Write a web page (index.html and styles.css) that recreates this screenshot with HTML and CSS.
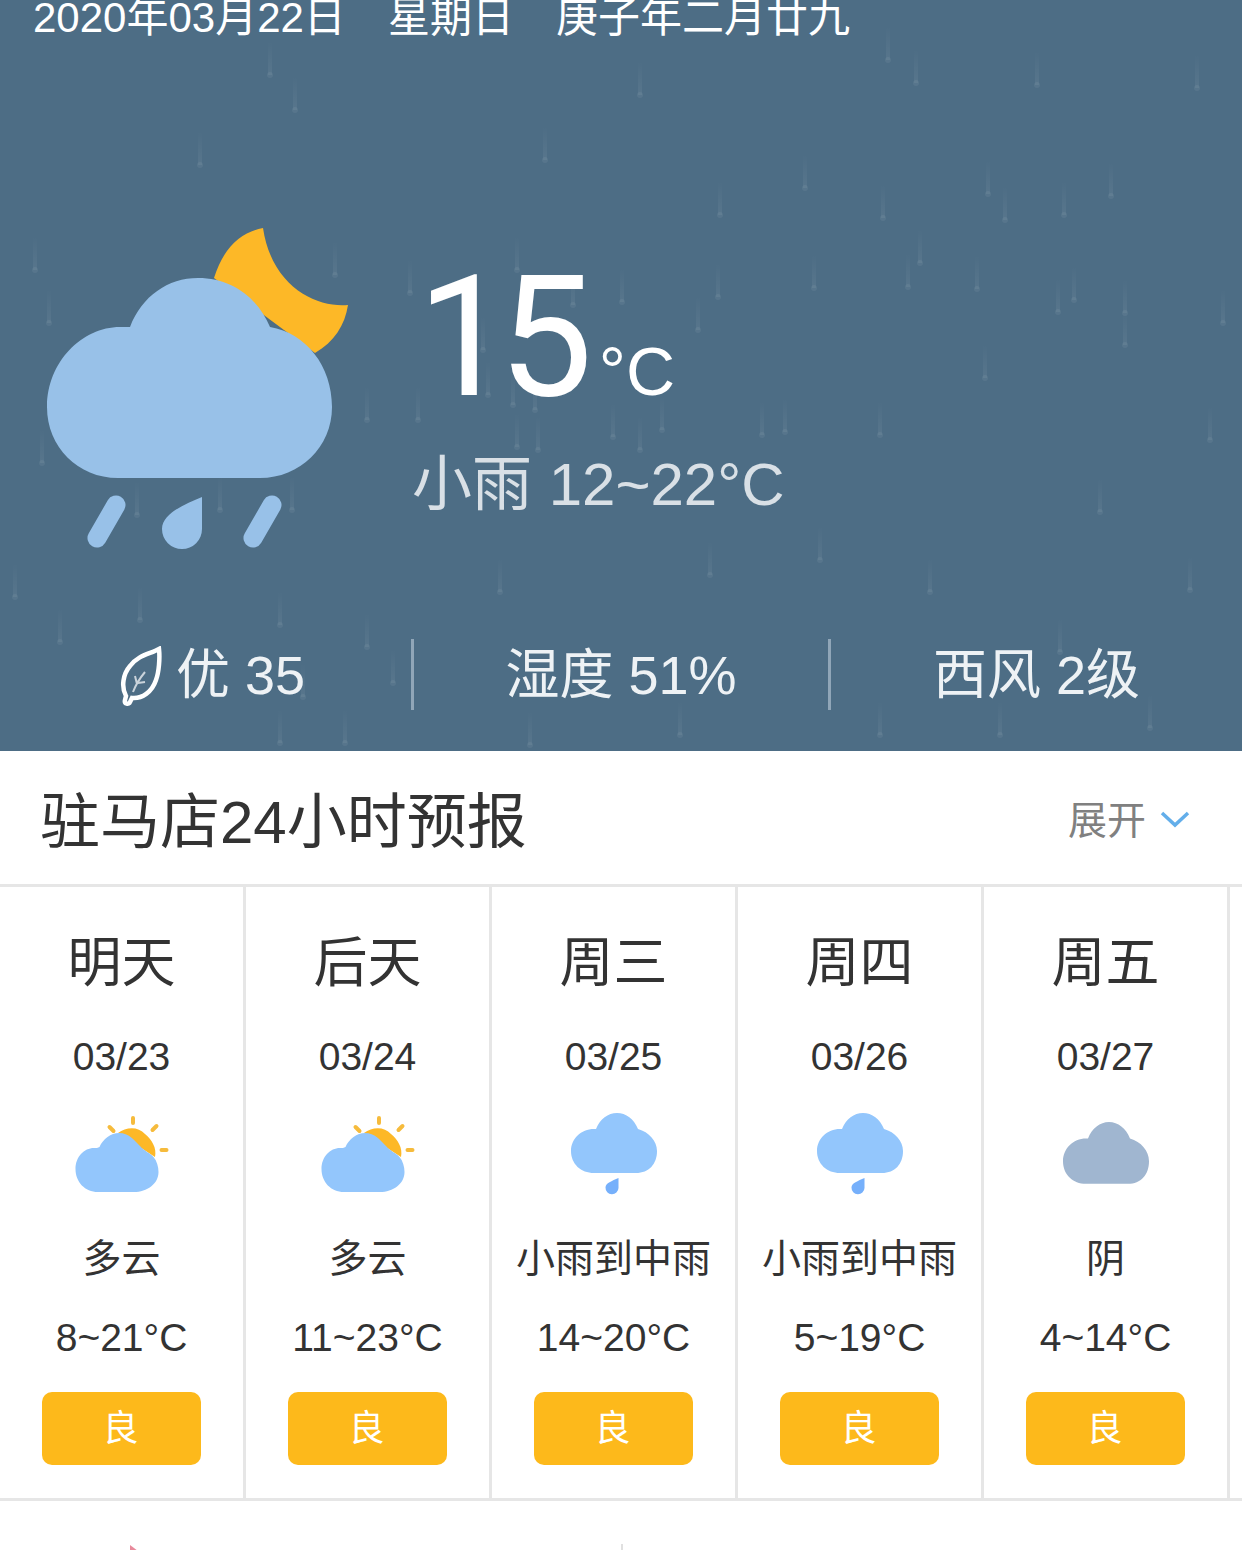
FILE: index.html
```html
<!DOCTYPE html>
<html lang="zh-CN">
<head>
    <meta charset="UTF-8">
    <meta name="viewport" content="width=device-width, initial-scale=1.0">
    <title>驻马店天气预报</title>
    <link rel="stylesheet" href="styles.css">
</head>
<body>
    <section class="hero">
        <svg class="rain" width="1242" height="751" viewBox="0 0 1242 751">
            <defs>
                <linearGradient id="streak" x1="0" y1="0" x2="0" y2="1">
                    <stop offset="0" stop-color="#fff" stop-opacity="0"/>
                    <stop offset="1" stop-color="#fff" stop-opacity="0.06"/>
                </linearGradient>
                <g id="drop">
                    <rect x="-2" y="-34" width="4" height="34" fill="url(#streak)"/>
                    <circle r="3" fill="#fff" fill-opacity="0.06"/>
                </g>
            </defs>
            <use href="#drop" x="888" y="60"/><use href="#drop" x="916" y="83"/><use href="#drop" x="1037" y="85"/>
            <use href="#drop" x="1197" y="88"/><use href="#drop" x="805" y="188"/><use href="#drop" x="883" y="218"/>
            <use href="#drop" x="988" y="194"/><use href="#drop" x="1005" y="220"/><use href="#drop" x="1064" y="215"/>
            <use href="#drop" x="1111" y="196"/><use href="#drop" x="920" y="263"/><use href="#drop" x="814" y="288"/>
            <use href="#drop" x="908" y="287"/><use href="#drop" x="977" y="289"/><use href="#drop" x="1058" y="312"/>
            <use href="#drop" x="1074" y="300"/><use href="#drop" x="1125" y="313"/><use href="#drop" x="1223" y="323"/>
            <use href="#drop" x="410" y="293"/><use href="#drop" x="517" y="270"/><use href="#drop" x="573" y="305"/>
            <use href="#drop" x="622" y="302"/><use href="#drop" x="718" y="297"/><use href="#drop" x="698" y="330"/>
            <use href="#drop" x="483" y="350"/><use href="#drop" x="488" y="395"/><use href="#drop" x="513" y="405"/>
            <use href="#drop" x="535" y="410"/><use href="#drop" x="418" y="420"/><use href="#drop" x="613" y="437"/>
            <use href="#drop" x="640" y="450"/><use href="#drop" x="662" y="430"/><use href="#drop" x="762" y="435"/>
            <use href="#drop" x="785" y="432"/><use href="#drop" x="538" y="450"/><use href="#drop" x="517" y="447"/>
            <use href="#drop" x="270" y="75"/><use href="#drop" x="295" y="110"/><use href="#drop" x="200" y="165"/>
            <use href="#drop" x="545" y="160"/><use href="#drop" x="640" y="95"/><use href="#drop" x="720" y="215"/>
            <use href="#drop" x="35" y="270"/><use href="#drop" x="49" y="323"/><use href="#drop" x="42" y="463"/>
            <use href="#drop" x="335" y="275"/><use href="#drop" x="137" y="515"/><use href="#drop" x="220" y="510"/>
            <use href="#drop" x="292" y="510"/><use href="#drop" x="367" y="420"/><use href="#drop" x="880" y="435"/>
            <use href="#drop" x="1125" y="345"/><use href="#drop" x="985" y="378"/><use href="#drop" x="1210" y="440"/>
            <use href="#drop" x="1100" y="512"/><use href="#drop" x="820" y="560"/><use href="#drop" x="930" y="592"/>
            <use href="#drop" x="1190" y="590"/><use href="#drop" x="1060" y="652"/><use href="#drop" x="500" y="592"/>
            <use href="#drop" x="710" y="575"/><use href="#drop" x="280" y="625"/><use href="#drop" x="140" y="620"/>
            <use href="#drop" x="60" y="642"/><use href="#drop" x="15" y="597"/><use href="#drop" x="367" y="647"/>
            <use href="#drop" x="393" y="683"/><use href="#drop" x="280" y="743"/><use href="#drop" x="345" y="743"/>
            <use href="#drop" x="303" y="697"/><use href="#drop" x="530" y="745"/><use href="#drop" x="680" y="735"/>
            <use href="#drop" x="880" y="735"/><use href="#drop" x="1000" y="735"/><use href="#drop" x="1150" y="728"/>
        </svg>

        <div class="hero-date">
            <span>2020年03月22日</span>
            <span>星期日</span>
            <span>庚子年二月廿九</span>
        </div>

        <div class="hero-main">
            <svg class="hero-icon" width="304" height="324" viewBox="0 0 304 324">
                <path class="moon" d="M217 0C196 4 178 18 168 50L269 125C288 114 299 97 302 77C272 80 226 60 217 0Z"/>
                <path class="cloud" d="M84 99C96 68 122 50 152 50C186 50 212 70 224 99C260 105 286 138 286 179C286 219 254 250 214 250H72C32 250 1 219 1 179C1 134 36 99 74 99Z"/>
                <path class="cloud" d="M156 269V301A20 20 0 0 1 116 301C116 285 140 276 156 269Z"/>
                <path class="cloud-rain" d="M70 277L51 310M226 277L207 310"/>
            </svg>
            <div class="hero-now">
                <div class="temp">15<span class="temp-unit">°C</span></div>
                <div class="temp-range">小雨 12~22°C</div>
            </div>
        </div>

        <div class="hero-stats">
            <div class="stat stat-air">
                <svg class="leaf" width="44" height="62" viewBox="0 0 44 62">
                    <path d="M39 3C30 8 18 9 10 20C3 28 1 41 6 50L5 54C4 58 9 59 10 56L12 52C22 53 32 46 36 34C39 26 40 12 39 3Z"/>
                    <path class="leaf-vein" d="M13 46C16 38 20 32 25 26M17 38L15 30M18 37L25 36"/>
                </svg>
                <span>优 35</span>
            </div>
            <div class="stat">湿度 51%</div>
            <div class="stat">西风 2级</div>
        </div>
    </section>

    <section class="forecast">
        <div class="forecast-head">
            <h2>驻马店24小时预报</h2>
            <div class="toggle">
                展开
                <svg width="30" height="18" viewBox="0 0 30 18"><path d="M2 3L15 15L28 3"/></svg>
            </div>
        </div>

        <div class="days">
            <div class="day">
                <div class="day-name">明天</div>
                <div class="day-date">03/23</div>
                <svg class="day-icon" width="96" height="84" viewBox="0 0 96 84">
                    <use href="#partly"/>
                </svg>
                <div class="day-text">多云</div>
                <div class="day-text">8~21°C</div>
                <div class="pill">良</div>
            </div>
            <div class="day">
                <div class="day-name">后天</div>
                <div class="day-date">03/24</div>
                <svg class="day-icon" width="96" height="84" viewBox="0 0 96 84">
                    <use href="#partly"/>
                </svg>
                <div class="day-text">多云</div>
                <div class="day-text">11~23°C</div>
                <div class="pill">良</div>
            </div>
            <div class="day">
                <div class="day-name">周三</div>
                <div class="day-date">03/25</div>
                <svg class="day-icon" width="96" height="84" viewBox="0 0 96 84">
                    <use href="#rainy"/>
                </svg>
                <div class="day-text">小雨到中雨</div>
                <div class="day-text">14~20°C</div>
                <div class="pill">良</div>
            </div>
            <div class="day">
                <div class="day-name">周四</div>
                <div class="day-date">03/26</div>
                <svg class="day-icon" width="96" height="84" viewBox="0 0 96 84">
                    <use href="#rainy"/>
                </svg>
                <div class="day-text">小雨到中雨</div>
                <div class="day-text">5~19°C</div>
                <div class="pill">良</div>
            </div>
            <div class="day">
                <div class="day-name">周五</div>
                <div class="day-date">03/27</div>
                <svg class="day-icon" width="96" height="84" viewBox="0 0 96 84">
                    <use href="#overcast"/>
                </svg>
                <div class="day-text">阴</div>
                <div class="day-text">4~14°C</div>
                <div class="pill">良</div>
            </div>
        </div>
    </section>

    <section class="next-section">
        <span class="pink-mark"></span>
        <span class="next-line"></span>
    </section>

    <svg class="defs" width="0" height="0">
        <defs>
            <g id="partly">
                <path fill="#fdb827" d="M44 21C52 15 64 14 71 22C78 28 83 36 81 45Z"/>
                <path fill="none" stroke="#f6bb3c" stroke-width="4" stroke-linecap="round" d="M59 6V11M35.500 15L39.500 19M78.500 18L82.500 14M87.500 38H92.500"/>
                <path fill="#93c6fc" d="M25.500 35C29 27 37 21 45 21C55 21 60 28 66 34C70 39 76 41 79.500 45C83 49 84.500 55 84.500 60C84.500 72 73 80 60 80H24C11 80 1.500 70 1.500 57C1.500 45 10 36 20 36C22 36 24 36 25.500 35Z"/>
            </g>
            <path id="puff" d="M30 17C34 7 42 1 51 1C60 1 68 7 72 17C83 20 91 29 91 39C91 52 83 61 70 61H28C15 61 5 52 5 39C5 27 15 17 28 17Z"/>
            <g id="rainy">
                <use href="#puff" fill="#93c6fc"/>
                <path fill="#76b0fb" d="M52.500 66V76A6.500 6.500 0 0 1 39.500 75.500C39.500 71 46 69 52.500 66Z"/>
            </g>
            <g id="overcast">
                <use href="#puff" fill="#a0b6d0" transform="translate(0 9) scale(1 1.03)"/>
            </g>
        </defs>
    </svg>
</body>
</html>
```

FILE: styles.css
```css
* {
    box-sizing: border-box;
}

body {
    font-family: "Liberation Sans", "Noto Sans CJK SC", sans-serif;
    background: #fff;
    margin: 0;
    width: 1242px;
    height: 1550px;
    overflow: hidden;
}

.hero {
    position: relative;
    height: 751px;
    background-color: #4d6d85;
    color: #fff;
    overflow: hidden;
}

.rain {
    position: absolute;
    top: 0;
    left: 0;
}

.hero-date {
    position: relative;
    display: flex;
    gap: 42px;
    padding-left: 33px;
    font-size: 42px;
    line-height: 36px;
}

.hero-main {
    position: relative;
    display: flex;
    padding: 192px 0 0 46px;
    height: 603px;
}

.hero-icon {
    flex: none;
}

.moon {
    fill: #fdb827;
}

.cloud {
    fill: #98c1e8;
}

.cloud-rain {
    fill: none;
    stroke: #98c1e8;
    stroke-width: 19;
    stroke-linecap: round;
}

.hero-now {
    margin: 26px 0 0 62px;
}

/* the 1 in Liberation has a foot, the reference's does not */
.temp {
    font-family: Roboto, "Liberation Sans", sans-serif;
    font-size: 168px;
    line-height: 168px;
    letter-spacing: -13px;
    padding-left: 5px;
    white-space: nowrap;
}

.temp-unit {
    font-family: "Liberation Sans", sans-serif;
    font-size: 68px;
    line-height: 1;
    letter-spacing: 0;
    margin-left: 19px;
}

.temp-range {
    font-size: 60px;
    line-height: 64px;
    margin-top: 31px;
    color: #d9e0e6;
    white-space: nowrap;
}

.hero-stats {
    position: relative;
    display: grid;
    grid-template-columns: 414px 417px 1fr;
    height: 71px;
}

.stat {
    display: flex;
    align-items: center;
    justify-content: center;
    gap: 12px;
    font-size: 54px;
    line-height: 60px;
    color: #eef2f5;
    border-right: 3px solid #90a6b8;
}

.stat:last-child {
    border-right: none;
}

.stat-air {
    padding-left: 14px;
}

.leaf {
    flex: none;
    fill: none;
    stroke: #fff;
    stroke-width: 4.5;
    margin-top: 4px;
}

.leaf-vein {
    stroke-width: 2;
    opacity: 0.7;
}

.forecast-head {
    display: flex;
    justify-content: space-between;
    align-items: center;
    height: 136px;
    padding: 0 52px 3px 40px;
    border-bottom: 3px solid #e6e6e6;
}

.forecast-head h2 {
    margin: 0;
    font-size: 60px;
    font-weight: normal;
    color: #333;
}

.toggle {
    display: flex;
    align-items: center;
    gap: 14px;
    font-size: 39px;
    padding-top: 2px;
    color: #808080;
}

.toggle svg {
    fill: none;
    stroke: #63aeea;
    stroke-width: 3.5;
    margin-top: 4px;
}

.days {
    display: flex;
    height: 614px;
    border-bottom: 3px solid #e6e6e6;
}

.day {
    width: 246px;
    display: flex;
    flex-direction: column;
    align-items: center;
    border-right: 3px solid #e6e6e6;
    color: #333;
    text-align: center;
}

.day-name {
    font-size: 54px;
    line-height: 60px;
    margin-top: 46px;
}

.day-date,
.day-text {
    font-size: 39px;
    line-height: 44px;
    white-space: nowrap;
}

.day-date {
    margin-top: 42px;
}

.day-icon {
    margin-top: 33px;
}

.day-icon + .day-text {
    margin-top: 41px;
}

.day-text + .day-text {
    margin-top: 35px;
}

.pill {
    width: 159px;
    height: 73px;
    margin-top: 32px;
    padding-right: 2px;
    background-color: #fdb91b;
    border-radius: 10px;
    color: #fff;
    font-size: 36px;
    line-height: 73px;
}

.next-section {
    position: relative;
    height: 49px;
}

.pink-mark {
    position: absolute;
    left: 130px;
    top: 44px;
    width: 8px;
    height: 6px;
    background: #e88a9c;
    clip-path: polygon(0 0, 100% 100%, 0 100%);
}

.next-line {
    position: absolute;
    left: 621px;
    top: 43px;
    width: 2px;
    height: 6px;
    background: #e0e0e0;
}

.defs {
    position: absolute;
}
```
